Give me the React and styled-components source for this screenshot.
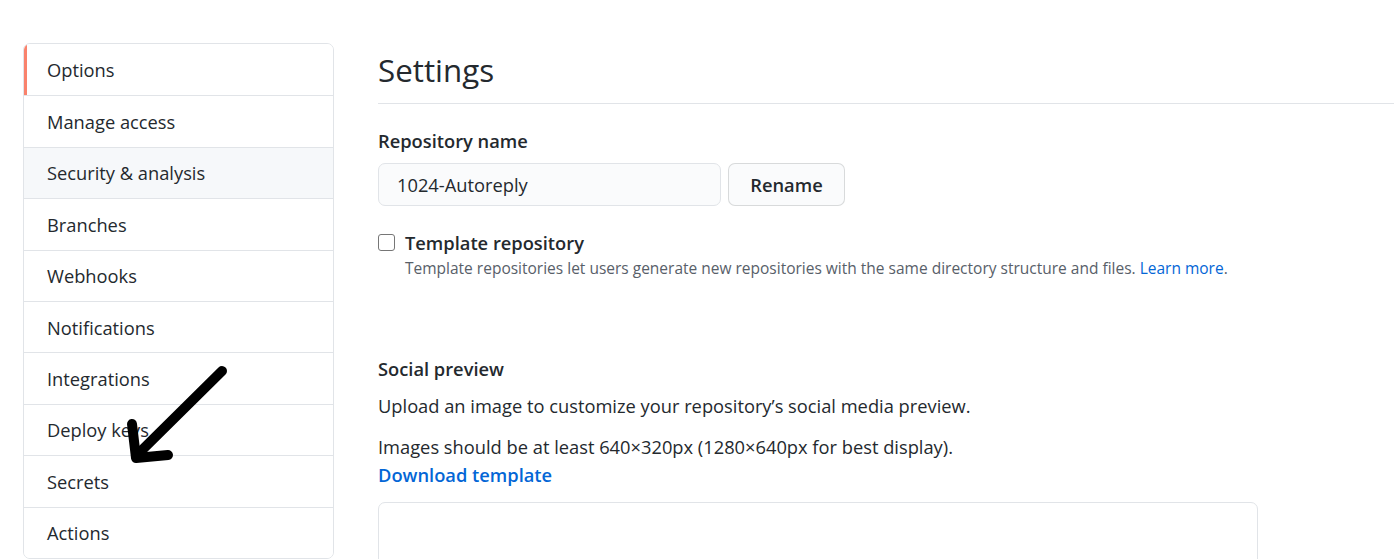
import React from 'react';
import styled, { createGlobalStyle } from 'styled-components';

const GlobalStyle = createGlobalStyle`
  html, body {
    margin: 0;
    padding: 0;
    background: #fff;
    overflow: hidden;
  }
  body {
    font-family: "Open Sans", "Noto Sans", Arial, sans-serif;
    color: #24292e;
  }
`;

const Page = styled.div`
  position: relative;
  display: flex;
  align-items: flex-start;
  gap: 44px;
  padding: 43px 0 0 23px;
  height: 559px;
  box-sizing: border-box;
`;

const Menu = styled.nav`
  flex: 0 0 311px;
  border: 1px solid #e1e4e8;
  border-radius: 7px;
  overflow: hidden;
  box-sizing: border-box;
`;

const MenuItem = styled.a`
  display: flex;
  align-items: center;
  height: 51.4px;
  padding-left: ${(p) => (p.$selected ? '20px' : '23px')};
  border-left: ${(p) => (p.$selected ? '3px solid #f9826c' : 'none')};
  border-top: ${(p) => (p.$first ? 'none' : '1px solid #e1e4e8')};
  background: ${(p) => (p.$hover ? '#f6f8fa' : '#fff')};
  font-size: 18.3px;
  color: #24292e;
  box-sizing: border-box;
  text-decoration: none;
`;

const Main = styled.main`
  flex: 1;
  min-width: 0;
`;

const Subhead = styled.div`
  display: flex;
  align-items: center;
  height: 61px;
  padding-bottom: 6px;
  box-sizing: border-box;
  border-bottom: 1px solid #e1e4e8;
`;

const Heading = styled.h2`
  margin: 0;
  font-size: 31.3px;
  line-height: 40px;
  font-weight: 400;
  color: #24292e;
`;

const Label = styled.div`
  font-size: 18.3px;
  line-height: 26px;
  font-weight: 600;
  color: #24292e;
  margin-top: ${(p) => p.$top || 0}px;
`;

const Row = styled.div`
  display: flex;
  gap: 7px;
  margin-top: 9px;
`;

const TextInput = styled.div`
  width: 343px;
  height: 43px;
  padding: 0 18px;
  display: flex;
  align-items: center;
  box-sizing: border-box;
  background: #fafbfc;
  border: 1px solid #e1e4e8;
  border-radius: 7px;
  font-size: 18.3px;
  color: #24292e;
`;

const Button = styled.button`
  width: 117px;
  height: 43px;
  background: #fafbfc;
  border: 1px solid rgba(27, 31, 35, 0.15);
  border-radius: 7px;
  font-family: inherit;
  font-size: 18.3px;
  font-weight: 600;
  color: #24292e;
`;

const CheckRow = styled.div`
  display: flex;
  gap: 10px;
  margin-top: 24px;
`;

const Box = styled.span`
  flex: 0 0 auto;
  width: 15px;
  height: 15px;
  margin-top: 4px;
  border: 1px solid #767676;
  border-radius: 3px;
`;

const Note = styled.div`
  font-size: 15.5px;
  line-height: 22px;
  color: #586069;
  margin-top: 1px;
`;

const Link = styled.a`
  color: #0366d6;
  text-decoration: none;
  font-weight: ${(p) => (p.$bold ? 600 : 400)};
`;

const Para = styled.p`
  margin: ${(p) => p.$top || 0}px 0 0;
  font-size: 18.3px;
  line-height: 26px;
  color: #24292e;
`;

const Preview = styled.div`
  width: 880px;
  height: 120px;
  margin-top: 14px;
  border: 1px solid #e1e4e8;
  border-radius: 7px;
  box-sizing: border-box;
`;

const Arrow = styled.svg`
  position: absolute;
  left: 120px;
  top: 360px;
`;

const items = [
  'Options',
  'Manage access',
  'Security & analysis',
  'Branches',
  'Webhooks',
  'Notifications',
  'Integrations',
  'Deploy keys',
  'Secrets',
  'Actions',
];

export default function App() {
  return (
    <>
      <GlobalStyle />
      <Page>
        <Menu>
          {items.map((it, i) => (
            <MenuItem key={it} $first={i === 0} $selected={i === 0} $hover={i === 2}>
              {it}
            </MenuItem>
          ))}
        </Menu>
        <Main>
          <Subhead>
            <Heading>Settings</Heading>
          </Subhead>
          <Label $top={24}>Repository name</Label>
          <Row>
            <TextInput>1024-Autoreply</TextInput>
            <Button>Rename</Button>
          </Row>
          <CheckRow>
            <Box />
            <div>
              <Label>Template repository</Label>
              <Note>
                Template repositories let users generate new repositories with the same directory
                structure and files. <Link>Learn more</Link>.
              </Note>
            </div>
          </CheckRow>
          <Label $top={77}>Social preview</Label>
          <Para $top={11}>Upload an image to customize your repository’s social media preview.</Para>
          <Para $top={15}>Images should be at least 640×320px (1280×640px for best display).</Para>
          <Para $top={2}>
            <Link $bold>Download template</Link>
          </Para>
          <Preview />
        </Main>
        <Arrow width="120" height="110" viewBox="0 0 120 110">
          <g fill="none" stroke="#000" strokeWidth="10" strokeLinecap="round" strokeLinejoin="round">
            <path d="M102 11 L16 96" />
            <path d="M12 64 L16 98 L48 95" />
          </g>
        </Arrow>
      </Page>
    </>
  );
}
